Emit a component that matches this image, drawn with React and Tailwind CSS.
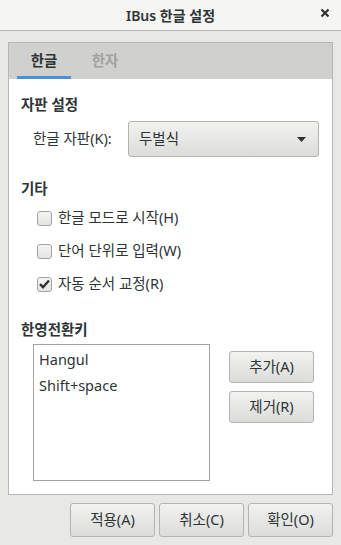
import React, { useState } from "react";

const font = { fontFamily: '"Noto Sans", "Noto Sans CJK KR", sans-serif' };

const Check = ({ checked, label }) => (
  <div className="flex h-[20px] items-center gap-[6px]">
    <div className="flex h-[15px] w-[15px] items-center justify-center rounded-[3px] border border-[#a3a3a0] bg-gradient-to-b from-[#f4f4f3] to-[#e4e4e2]">
      {checked && (
        <svg width="11" height="10" viewBox="0 0 11 10">
          <path d="M1 5.2 L4 8.2 L10 1.5" fill="none" stroke="#2e3436" strokeWidth="2.4" />
        </svg>
      )}
    </div>
    <span>{label}</span>
  </div>
);

const Btn = ({ children, className = "" }) => (
  <button
    className={
      "flex items-center justify-center rounded-[3px] border border-[#b3b3b0] bg-gradient-to-b from-[#f2f2f1] to-[#dcdcda] text-[#2e3436] " +
      className
    }
  >
    {children}
  </button>
);

export default function App() {
  const [tab, setTab] = useState("hangul");

  return (
    <div
      className="flex h-[545px] w-[341px] flex-col bg-[#e8e8e7] text-[14.5px] text-[#2e3436]"
      style={font}
    >
      {/* title bar */}
      <div className="relative flex h-[31px] shrink-0 items-center justify-center border-b border-[#b6b6b3] bg-[#f5f5f4]">
        <span className="text-[14px] font-semibold">IBus 한글 설정</span>
        <svg
          className="absolute right-[11px] top-[8px]"
          width="10"
          height="10"
          viewBox="0 0 10 10"
        >
          <path d="M1.5 1.5 L8.5 8.5 M8.5 1.5 L1.5 8.5" stroke="#2e3436" strokeWidth="2.2" />
        </svg>
      </div>

      {/* notebook */}
      <div className="mx-[8px] mt-[11px] flex flex-col border border-[#b6b6b3] bg-white">
        <div className="flex h-[36px] items-end gap-[7px] bg-[#d0d0ce] pl-[8px]">
          <button
            onClick={() => setTab("hangul")}
            className={
              "flex h-[36px] w-[54px] items-center justify-center border-b-[3px] pt-[2px] font-bold " +
              (tab === "hangul" ? "border-[#4a90d9] text-[#2e3436]" : "border-transparent text-[#a2a2a0]")
            }
          >
            한글
          </button>
          <button
            onClick={() => setTab("hanja")}
            className={
              "flex h-[36px] w-[54px] items-center justify-center border-b-[3px] pt-[2px] font-bold " +
              (tab === "hanja" ? "border-[#4a90d9] text-[#2e3436]" : "border-transparent text-[#a2a2a0]")
            }
          >
            한자
          </button>
        </div>

        <div className="flex flex-col pb-[13px] pl-[12px] pr-[13px] pt-[15px]">
          <div className="h-[20px] font-bold leading-[20px]">자판 설정</div>

          <div className="mt-[7px] flex h-[36px] items-center">
            <span className="ml-[12px] w-[95px]">한글 자판(K):</span>
            <div className="flex h-[36px] flex-1 items-center justify-between rounded-[3px] border border-[#b3b3b0] bg-gradient-to-b from-[#f2f2f1] to-[#dcdcda] pl-[10px] pr-[12px]">
              <span>두벌식</span>
              <svg width="9" height="5" viewBox="0 0 9 5">
                <path d="M0 0 H9 L4.5 5 Z" fill="#2e3436" />
              </svg>
            </div>
          </div>

          <div className="mt-[21px] h-[20px] font-bold leading-[20px]">기타</div>

          <div className="ml-[16px] mt-[10px] flex flex-col gap-[13px]">
            <Check label="한글 모드로 시작(H)" />
            <Check label="단어 단위로 입력(W)" />
            <Check checked label="자동 순서 교정(R)" />
          </div>

          <div className="mt-[25px] h-[20px] font-bold leading-[20px]">한영전환키</div>

          <div className="ml-[12px] mt-[5px] flex">
            <div className="flex h-[137px] w-[177px] flex-col border border-[#a3a3a0] bg-white pl-[5px] pt-[3px]">
              <div className="h-[26px] leading-[22px]">Hangul</div>
              <div className="h-[26px] leading-[22px]">Shift+space</div>
            </div>
            <div className="ml-[19px] mt-[7px] flex flex-col gap-[8px]">
              <Btn className="h-[32px] w-[85px]">추가(A)</Btn>
              <Btn className="h-[32px] w-[85px]">제거(R)</Btn>
            </div>
          </div>
        </div>
      </div>

      {/* dialog buttons */}
      <div className="mr-[8px] mt-[8px] flex justify-end gap-[4px]">
        <Btn className="h-[34px] w-[85px]">적용(A)</Btn>
        <Btn className="h-[34px] w-[85px]">취소(C)</Btn>
        <Btn className="h-[34px] w-[85px]">확인(O)</Btn>
      </div>
    </div>
  );
}
